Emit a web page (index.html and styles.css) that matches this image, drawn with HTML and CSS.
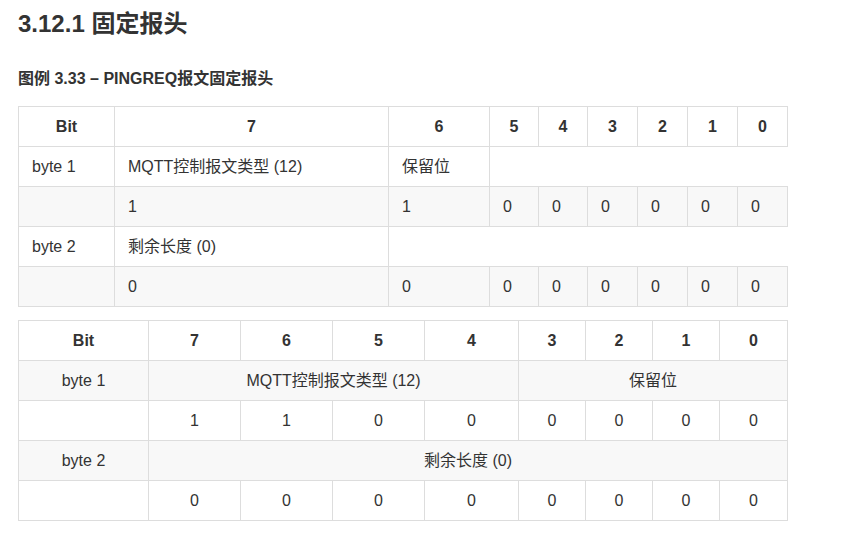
FILE: index.html
```html
<!DOCTYPE html>
<html lang="zh">
<head>
<meta charset="utf-8">
<title>3.12.1 固定报头</title>
<link rel="stylesheet" href="styles.css">
</head>
<body>
<div class="page">
  <h2 class="section-title">3.12.1 固定报头</h2>
  <h4 class="figure-title">图例 3.33 – PINGREQ报文固定报头</h4>

  <table class="bits bits-left">
    <colgroup>
      <col class="c1a"><col class="c1b"><col class="c1c"><col class="c1d"><col class="c1d"><col class="c1e"><col class="c1e"><col class="c1e"><col class="c1e">
    </colgroup>
    <thead>
      <tr><th>Bit</th><th>7</th><th>6</th><th>5</th><th>4</th><th>3</th><th>2</th><th>1</th><th>0</th></tr>
    </thead>
    <tbody>
      <tr><td>byte 1</td><td>MQTT控制报文类型 (12)</td><td>保留位</td></tr>
      <tr class="alt"><td></td><td>1</td><td>1</td><td>0</td><td>0</td><td>0</td><td>0</td><td>0</td><td>0</td></tr>
      <tr><td>byte 2</td><td>剩余长度 (0)</td></tr>
      <tr class="alt"><td></td><td>0</td><td>0</td><td>0</td><td>0</td><td>0</td><td>0</td><td>0</td><td>0</td></tr>
    </tbody>
  </table>

  <table class="bits bits-center">
    <colgroup>
      <col class="c2a"><col class="c2b"><col class="c2b"><col class="c2b"><col class="c2c"><col class="c2d"><col class="c2d"><col class="c2d"><col class="c2e">
    </colgroup>
    <thead>
      <tr><th>Bit</th><th>7</th><th>6</th><th>5</th><th>4</th><th>3</th><th>2</th><th>1</th><th>0</th></tr>
    </thead>
    <tbody>
      <tr class="alt"><td>byte 1</td><td colspan="4">MQTT控制报文类型 (12)</td><td colspan="4">保留位</td></tr>
      <tr><td></td><td>1</td><td>1</td><td>0</td><td>0</td><td>0</td><td>0</td><td>0</td><td>0</td></tr>
      <tr class="alt"><td>byte 2</td><td colspan="8">剩余长度 (0)</td></tr>
      <tr><td></td><td>0</td><td>0</td><td>0</td><td>0</td><td>0</td><td>0</td><td>0</td><td>0</td></tr>
    </tbody>
  </table>
</div>
</body>
</html>
```
FILE: styles.css
```css
html, body {
  margin: 0;
  padding: 0;
  background: #fff;
}

body {
  font-family: "Liberation Sans", "Noto Sans CJK SC", sans-serif;
  color: #333;
}

.page {
  padding: 10px 0 0 18px;
}

.section-title {
  margin: 0 0 30px;
  font-size: 24px;
  line-height: 1.2;
  font-weight: bold;
}

.figure-title {
  margin: 0 0 18px;
  font-size: 16px;
  line-height: 1.2;
  font-weight: bold;
}

.bits {
  border-collapse: collapse;
  border-spacing: 0;
  table-layout: fixed;
  width: 770px;
  margin-bottom: 13px;
  font-size: 16px;
}

.bits th,
.bits td {
  border: 1px solid #ddd;
  padding: 8px 13px;
  line-height: 23px;
  height: 23px;
  white-space: nowrap;
}

.bits th {
  font-weight: bold;
  text-align: center;
  background: #fff;
}

.bits-left td {
  text-align: left;
}

.bits-center td {
  text-align: center;
}

.bits tr.alt {
  background: #f8f8f8;
}

.c1a { width: 96px; }
.c1b { width: 274px; }
.c1c { width: 101px; }
.c1d { width: 49px; }
.c1e { width: 50px; }

.c2a { width: 130px; }
.c2b { width: 92px; }
.c2c { width: 94px; }
.c2d { width: 67px; }
.c2e { width: 68px; }
```
